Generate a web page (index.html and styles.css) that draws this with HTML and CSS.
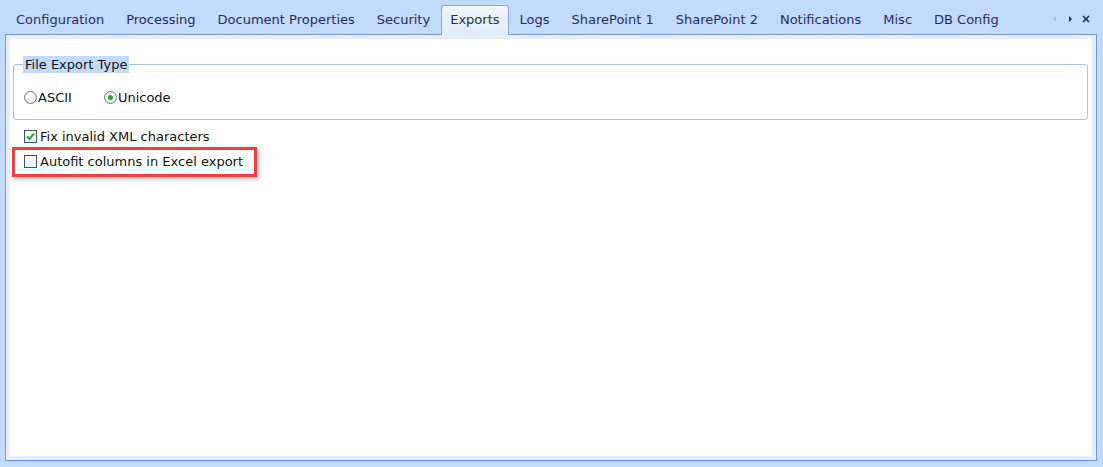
FILE: index.html
```html
<!DOCTYPE html>
<html>
<head>
<meta charset="utf-8">
<link rel="stylesheet" href="styles.css">
</head>
<body>
<div class="tabbar">
  <div class="tabs">
    <div class="tab">Configuration</div>
    <div class="tab">Processing</div>
    <div class="tab">Document Properties</div>
    <div class="tab">Security</div>
    <div class="tab active">Exports</div>
    <div class="tab">Logs</div>
    <div class="tab">SharePoint 1</div>
    <div class="tab">SharePoint 2</div>
    <div class="tab">Notifications</div>
    <div class="tab">Misc</div>
    <div class="tab">DB Config</div>
  </div>
  <div class="navs">
    <svg class="nav dim" width="6" height="8" viewBox="0 0 6 8"><path d="M4 1 L1 4 L4 7 Z" fill="#a9bedc"/></svg>
    <svg class="nav" width="6" height="8" viewBox="0 0 6 8"><path d="M2 1 L5 4 L2 7 Z" fill="#1b2a5a"/></svg>
    <svg class="nav close" width="8" height="8" viewBox="0 0 8 8"><path d="M1 1 L7 7 M7 1 L1 7" stroke="#1b2a5a" stroke-width="1.6"/></svg>
  </div>
</div>
<div class="panel">
  <div class="inner">
    <fieldset class="group">
      <legend>File Export Type</legend>
      <div class="radios">
        <label class="opt"><span class="radio"></span>ASCII</label>
        <label class="opt"><span class="radio on"></span>Unicode</label>
      </div>
    </fieldset>
    <div class="check-row first">
      <span class="cbox checked"><svg width="11" height="11" viewBox="0 0 11 11"><path d="M2 5.5 L4.5 8 L9 2.5" fill="none" stroke="#3aa23a" stroke-width="2"/></svg></span>
      <span>Fix invalid XML characters</span>
    </div>
    <div class="highlight">
      <div class="check-row inbox">
        <span class="cbox"></span>
        <span>Autofit columns in Excel export</span>
      </div>
    </div>
  </div>
</div>
</body>
</html>
```
FILE: styles.css
```css
html, body {
  margin: 0;
  padding: 0;
}
body {
  background: #c2dbfc;
  font-family: "DejaVu Sans", Verdana, sans-serif;
  font-size: 13px;
  color: #111;
  width: 1103px;
  height: 467px;
  overflow: hidden;
}
.tabbar {
  height: 34px;
  display: flex;
  justify-content: space-between;
  align-items: flex-end;
  position: relative;
  z-index: 2;
}
.tabs {
  display: flex;
  align-items: flex-end;
  padding-left: 5px;
}
.tab {
  height: 29px;
  line-height: 28px;
  padding: 0 10px;
  color: #1f2d66;
  box-sizing: border-box;
  white-space: nowrap;
  border: 1px solid transparent;
  border-bottom: none;
}
.tab.active {
  background: linear-gradient(#f1f5fc, #e0eaf8);
  border-color: #86a9d9;
  border-radius: 3px 3px 0 0;
  height: 30px;
  margin-bottom: -1px;
  padding: 0 8px;
}
.navs {
  display: flex;
  align-items: center;
  gap: 9px;
  height: 30px;
  padding-right: 13px;
}
.panel {
  margin: 0 6px 0 5px;
  height: 427px;
  box-sizing: border-box;
  border: 1px solid #6f9bd6;
  background: #e7eef9;
  padding: 4px;
  position: relative;
  z-index: 1;
}
.inner {
  background: #fff;
  height: 100%;
  padding-top: 17px;
  box-sizing: border-box;
}
.group {
  margin: 0 4px 0 3px;
  border: 1px solid #a9c4eb;
  border-radius: 3px;
  padding: 17px 10px 0 10px;
  height: 64px;
  box-sizing: border-box;
}
.group legend {
  background: #c2dbfc;
  padding: 0 2px;
  margin-left: -1px;
  height: 17px;
  line-height: 17px;
  color: #111;
}
.radios {
  display: flex;
  gap: 32px;
  align-items: center;
}
.opt {
  display: flex;
  align-items: center;
}
.radio {
  width: 11px;
  height: 11px;
  border-radius: 50%;
  border: 1px solid #707a88;
  background: radial-gradient(circle at 40% 35%, #ffffff, #e2e5ea);
  margin-right: 1px;
  position: relative;
}
.radio.on::after {
  content: "";
  position: absolute;
  left: 3px;
  top: 3px;
  width: 5px;
  height: 5px;
  border-radius: 50%;
  background: #2ea22e;
}
.check-row {
  display: flex;
  align-items: center;
  margin-left: 14px;
  height: 15px;
}
.check-row.first {
  margin-top: 9px;
}
.cbox {
  width: 11px;
  height: 11px;
  border: 1px solid #3a5273;
  background: linear-gradient(#ffffff, #eef1f5);
  margin-right: 3px;
  display: flex;
  align-items: center;
  justify-content: center;
}
.highlight {
  margin-left: 2px;
  margin-top: 3px;
  width: 245px;
  height: 30px;
  box-sizing: border-box;
  border: 3px solid #ee3f42;
  box-shadow: 2px 2px 4px rgba(0, 0, 0, 0.3);
  display: flex;
  align-items: center;
}
.check-row.inbox {
  margin: 0 0 1px 9px;
}
```
